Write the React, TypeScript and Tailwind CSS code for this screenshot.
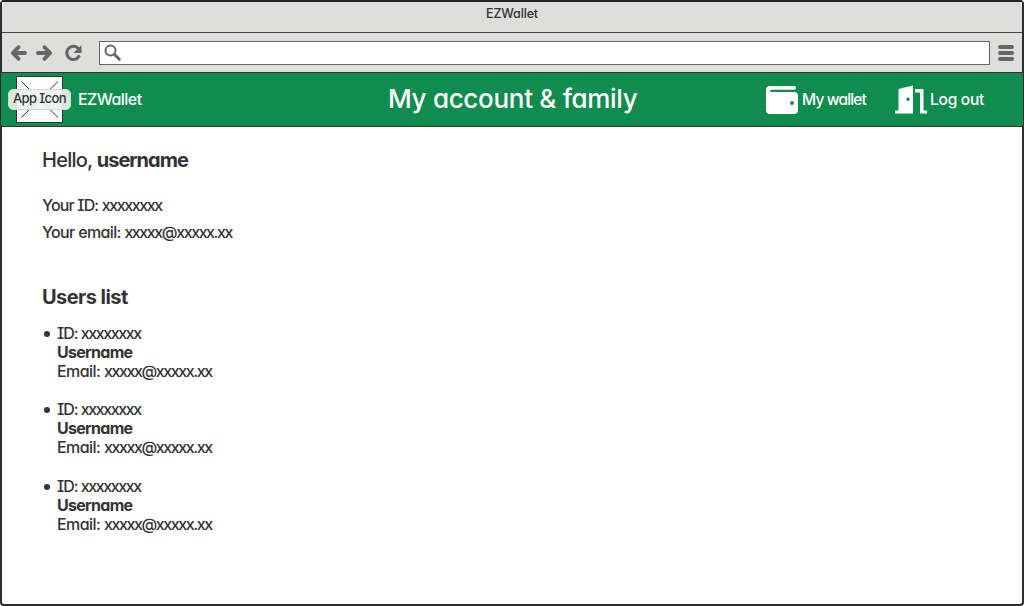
import React from 'react';

const users = [1, 2, 3];

function Placeholder() {
  return (
    <div className="relative ml-[15px] h-[47px] w-[47px] border border-[#333] bg-white">
      <svg className="block h-full w-full" viewBox="0 0 45 45" stroke="#333" strokeWidth="1">
        <path d="M4.5 4.5 41 40.5M41 4.5 4.5 40.5" />
      </svg>
      <div className="absolute -left-[9px] top-[12px] flex h-[21px] w-[63px] items-center justify-center whitespace-nowrap rounded-[5px] border border-[#cfdcd4] bg-[#eef3f0]/90 pb-px text-[13px] font-medium tracking-[-0.6px] text-[#333]">
        App Icon
      </div>
    </div>
  );
}

function Toolbar() {
  return (
    <div className="flex h-[40px] items-center border-b border-[#333] bg-[#dededc] pl-2 pr-2">
      <svg width="76" height="20" viewBox="0 0 76 20" fill="none" stroke="#666" strokeWidth="3.8" strokeLinecap="round" strokeLinejoin="round">
        <path d="M15 10H4M8.6 4.2 2.8 10l5.8 5.8" />
        <path d="M28 10h11M34.4 4.2 40.2 10l-5.8 5.8" />
        <path d="M68 5.2A6.6 6.6 0 1 0 69 13.4" strokeWidth="3" />
        <path d="M71.5 2v8h-8z" fill="#666" stroke="none" />
      </svg>
      <div className="ml-[13px] flex h-[24px] w-[891px] items-center border border-[#666] bg-white pl-1">
        <svg width="18" height="18" viewBox="0 0 18 18" fill="none" stroke="#666" strokeLinecap="round">
          <circle cx="6.5" cy="6.5" r="5" strokeWidth="2" />
          <path d="m10.5 10.5 4.8 4.8" strokeWidth="3" />
        </svg>
      </div>
      <div className="ml-2 flex flex-col gap-[2px]">
        <div className="h-1 w-4 rounded-full bg-[#666]" />
        <div className="h-1 w-4 rounded-full bg-[#666]" />
        <div className="h-1 w-4 rounded-full bg-[#666]" />
      </div>
    </div>
  );
}

function Header() {
  return (
    <header className="-mx-px flex h-[54px] items-center border-b border-[#333] bg-[#118c4f] text-white">
      <Placeholder />
      <div className="ml-[15px] w-[310px] pb-px text-[16px] font-medium tracking-[-0.55px]">EZWallet</div>
      <h1 className="w-[378px] whitespace-nowrap pb-[2px] text-[26px] font-medium leading-[30px] tracking-[-0.3px]">My account &amp; family</h1>
      <svg width="32" height="28" viewBox="0 0 32 28" fill="white">
        <path fillRule="evenodd" d="M4 0h24.5a1.8 1.8 0 0 1 1.5 1.8v0.4a1.8 1.8 0 0 1-1.5 1.6H5.2a1.1 1.1 0 0 0 0 2.2H28a4 4 0 0 1 4 4V24a4 4 0 0 1-4 4H4a4 4 0 0 1-4-4V4a4 4 0 0 1 4-4Zm22 15a2 2 0 1 0 0 4 2 2 0 0 0 0-4Z" />
      </svg>
      <div className="ml-[4px] w-[93px] whitespace-nowrap text-[15.5px] font-medium tracking-[-0.85px]">My wallet</div>
      <svg width="32" height="29" viewBox="0 0 32 29" fill="white">
        <path fillRule="evenodd" d="M3.5 4 18 0.5v28H0v-3h3.5Zm9.5 8.5a1.8 1.8 0 1 0 0 3.6 1.8 1.8 0 0 0 0-3.6Z" />
        <path d="M20 4h8.5v21.5H32v3h-7V7.5h-5Z" />
      </svg>
      <div className="ml-[3px] whitespace-nowrap text-[15.5px] font-medium tracking-[-0.25px]">Log out</div>
    </header>
  );
}

export default function App() {
  return (
    <div className="flex h-[606px] w-[1024px] flex-col rounded-[4px] border-2 border-[#2d2d2e] border-t-[#231f20] bg-white font-['Inter','Liberation_Sans',sans-serif] text-[#333] [font-feature-settings:'cv11','cv08']">
      <div className="flex h-[31px] justify-center border-b border-[#444] bg-[#dededc] pt-[3px] text-[12.5px] font-medium leading-[18px] tracking-[-0.15px]">EZWallet</div>
      <Toolbar />
      <Header />
      <main className="whitespace-nowrap pl-10 text-[16px] font-medium leading-[19px]">
        <h2 className="mt-[21px] text-[20px] font-medium leading-6 tracking-[-0.75px]">
          Hello, <b className="font-bold tracking-[-1px]">username</b>
        </h2>
        <p className="mt-[24px] tracking-[-0.85px]">Your ID: <span className="tracking-[-1.4px]">xxxxxxxx</span></p>
        <p className="mt-[8px] tracking-[-0.65px]">Your email: <span className="tracking-[-1.42px]">xxxxx@xxxxx.xx</span></p>
        <h2 className="mt-[43px] text-[20px] font-bold leading-6 tracking-[-0.55px]">Users list</h2>
        <ul className="mt-[15px] flex flex-col gap-[19.4px]">
          {users.map((user) => (
            <li key={user} className="flex">
              <span className="mr-[7px] ml-[2px] mt-[7px] size-[6px] rounded-full bg-[#333]" />
              <div>
                <p className="tracking-[-1.05px]">ID: <span className="tracking-[-1.4px]">xxxxxxxx</span></p>
                <p className="font-bold tracking-[-0.7px]">Username</p>
                <p className="tracking-[-0.55px]">Email: <span className="tracking-[-1.42px]">xxxxx@xxxxx.xx</span></p>
              </div>
            </li>
          ))}
        </ul>
      </main>
    </div>
  );
}
